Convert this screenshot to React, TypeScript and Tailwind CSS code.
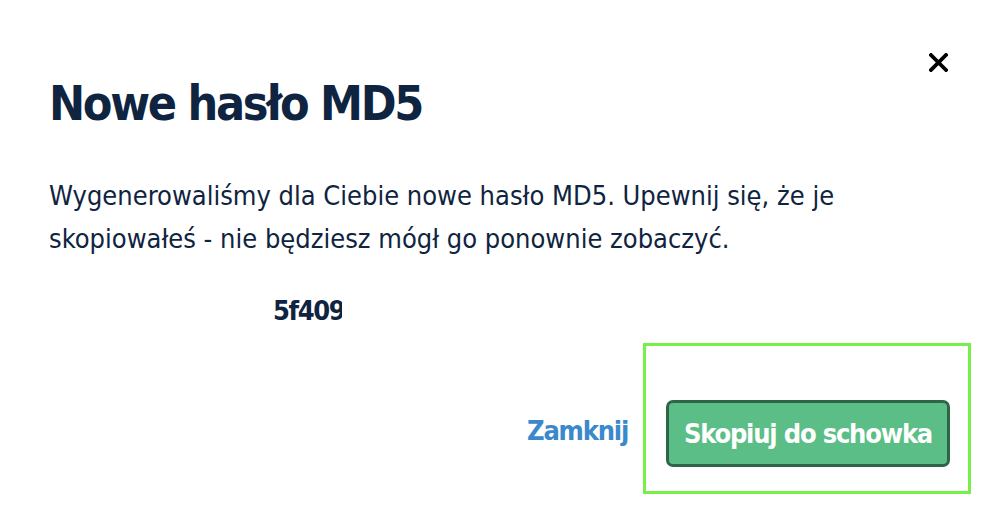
import React from "react";

export default function App() {
  return (
    <div
      className="w-[988px] h-[510px] bg-white overflow-hidden text-[#0f2440]"
      style={{ fontFamily: '"DejaVu Sans Condensed", "DejaVu Sans", sans-serif' }}
    >
      <div className="flex justify-end pt-[53px] pr-[40px]">
        <button className="w-[19px] h-[19px] flex items-center justify-center">
          <svg width="19" height="19" viewBox="0 0 19 19" fill="none">
            <path d="M2 2 L17 17 M17 2 L2 17" stroke="#000" strokeWidth="3.8" strokeLinecap="square" />
          </svg>
        </button>
      </div>
      <h1 className="ml-[49px] mt-[7px] text-[48px] leading-[48px] font-bold tracking-[-2.3px]">Nowe hasło MD5</h1>
      <p className="ml-[49px] mt-[47px] text-[27px] leading-[43px] w-[860px]">
        Wygenerowaliśmy dla Ciebie nowe hasło MD5. Upewnij się, że je skopiowałeś - nie będziesz mógł go ponownie zobaczyć.
      </p>
      <div className="ml-[273px] mt-[36px] w-[69px] overflow-hidden whitespace-nowrap text-[27px] leading-[30px] font-bold tracking-[-1.4px]">
        5f4098b3c2e1a7d9f0e6c4b2a8d1e3f7
      </div>
      <div className="flex justify-end items-center pr-[17px] mt-[17px]">
        <button className="text-[27px] leading-[32px] font-bold tracking-[-1.2px] text-[#3b88cc] mr-[15px] mt-[24px] whitespace-nowrap">Zamknij</button>
        <div className="border-[3px] border-[#76ef4b] pt-[54px] pb-[24px] pl-[20px] pr-[18px]">
          <button className="h-[67px] w-[284px] rounded-[7px] border-[3px] border-[#2d6646] bg-[#5abe86] text-white text-[27px] leading-[32px] font-bold tracking-[-1.2px] whitespace-nowrap flex items-center justify-center">
            Skopiuj do schowka
          </button>
        </div>
      </div>
    </div>
  );
}
